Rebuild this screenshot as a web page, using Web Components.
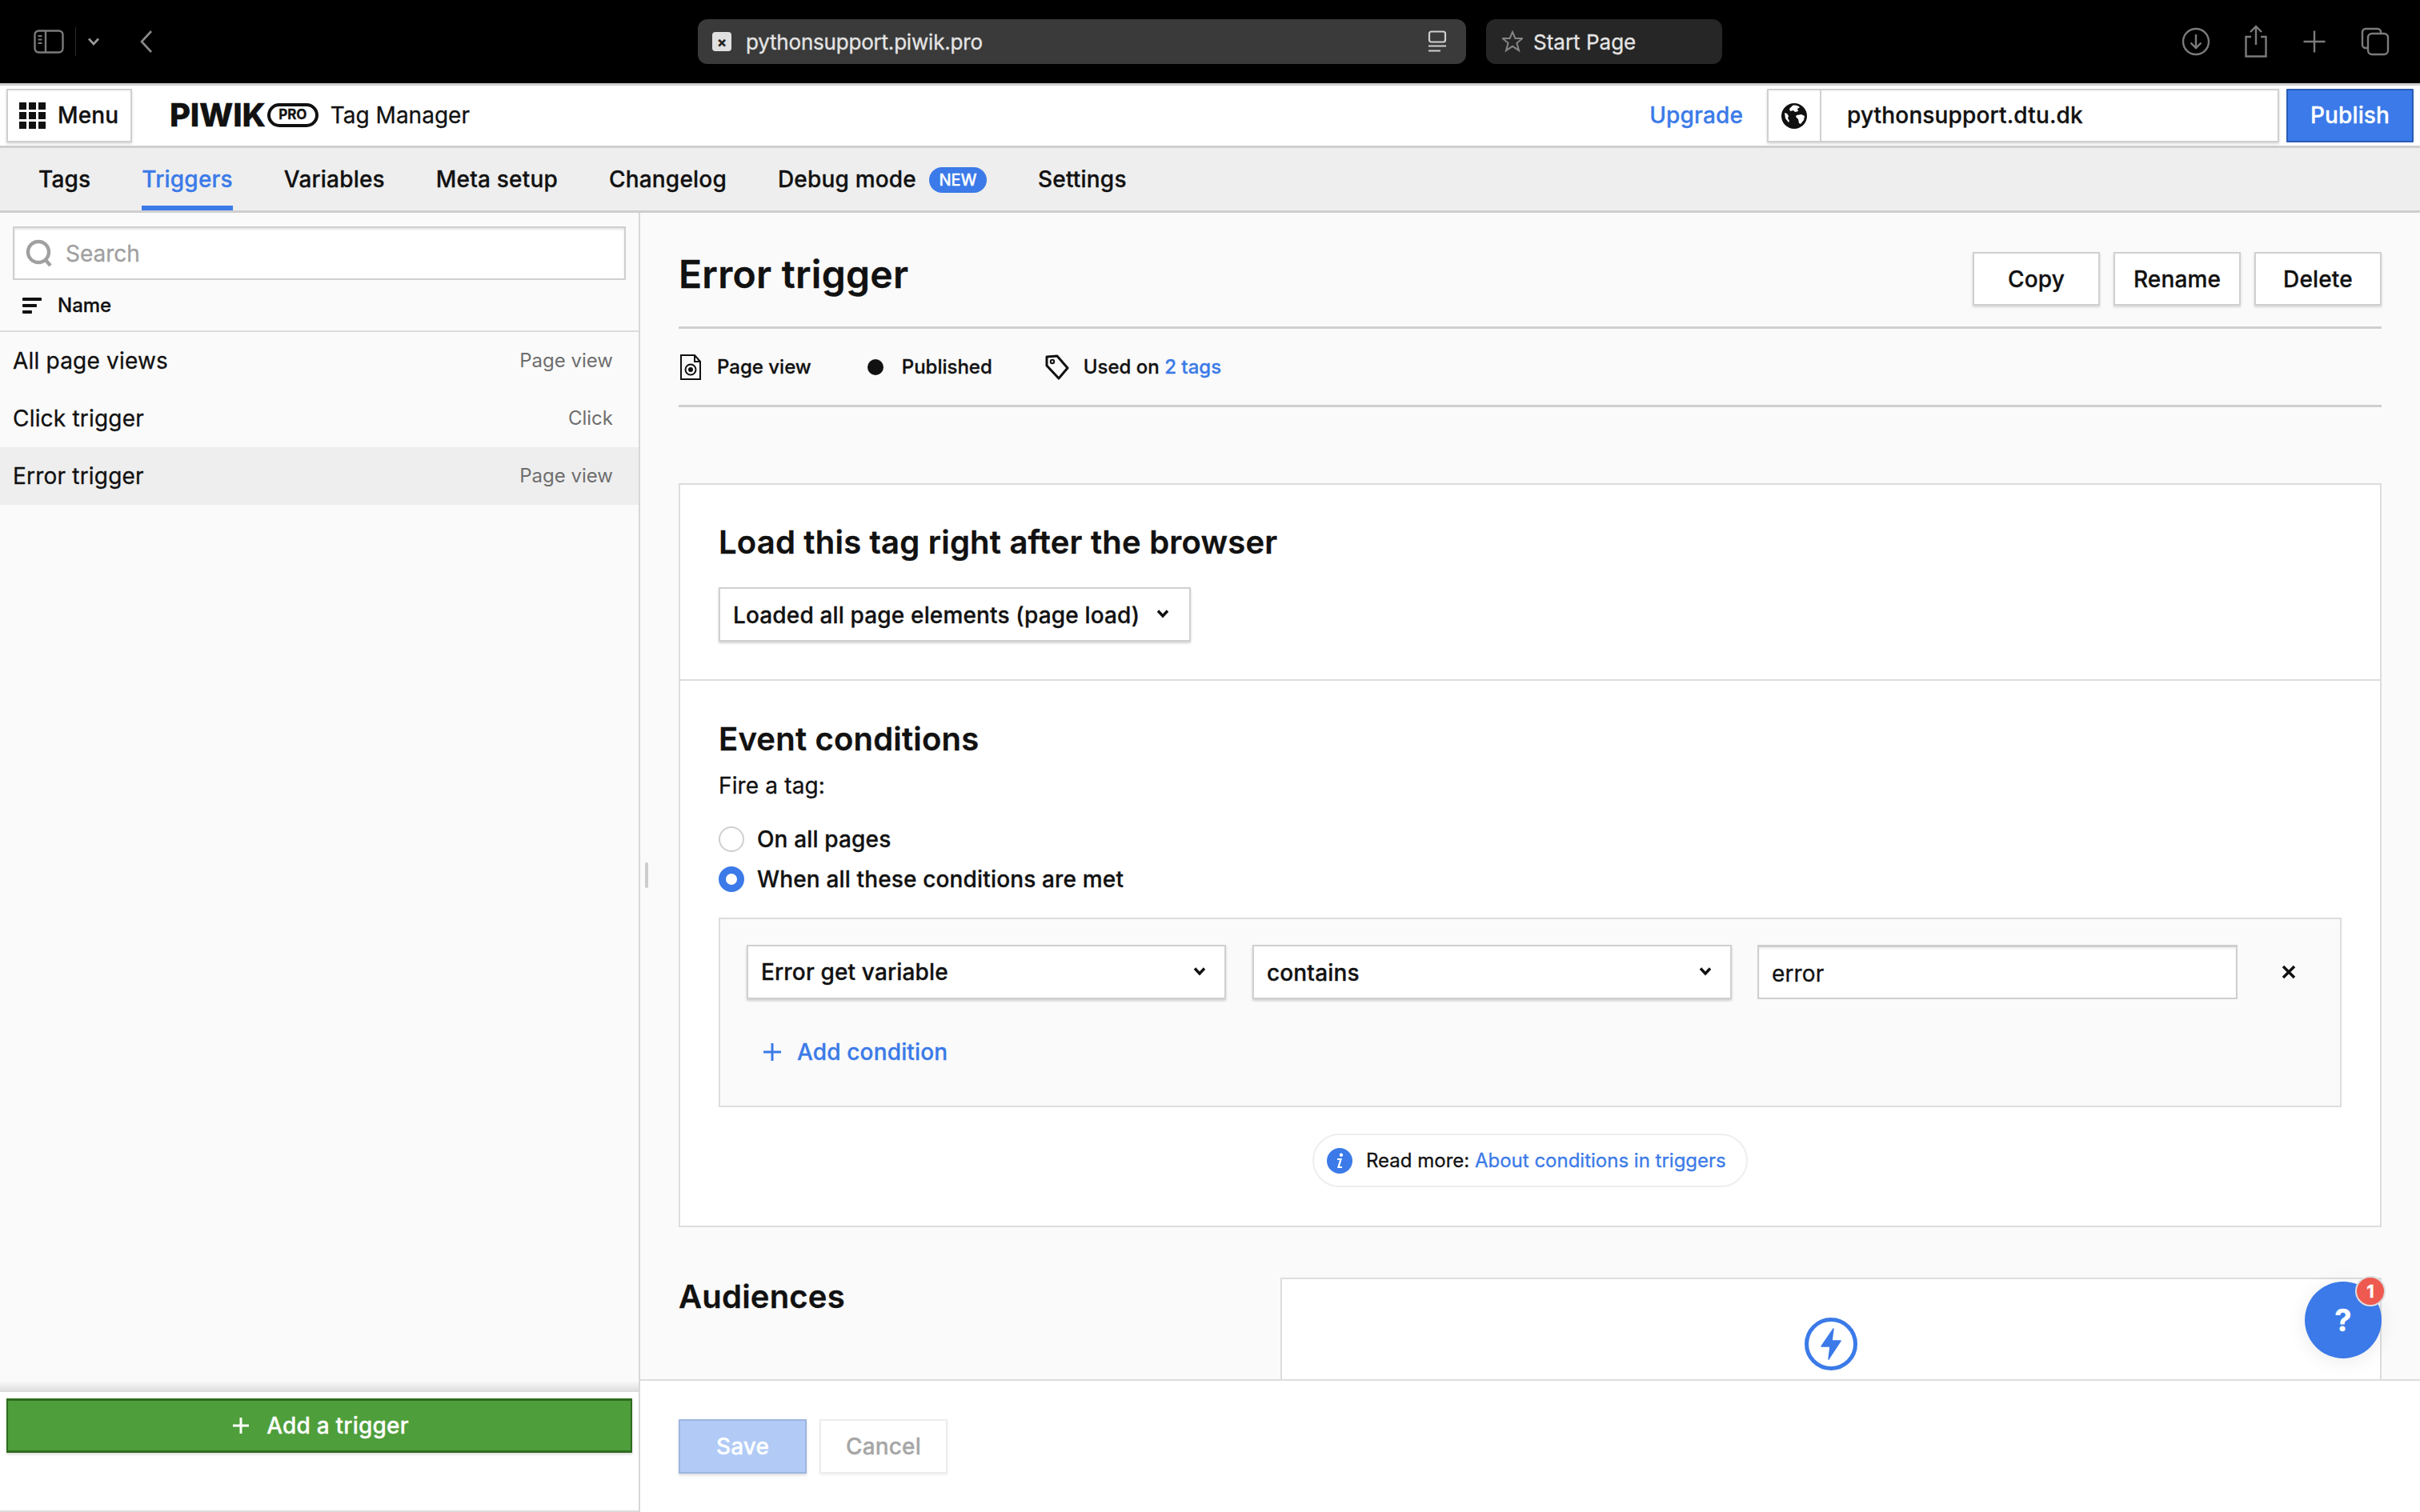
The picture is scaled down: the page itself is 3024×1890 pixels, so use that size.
<!DOCTYPE html>
<html lang="en"><head><meta charset="utf-8"><title>Error trigger</title>
<style>
html,body{margin:0;padding:0;height:100%;overflow:hidden;background:#fafafa}
body{font-family:Inter,"Liberation Sans",sans-serif;color:#111;font-size:28px;letter-spacing:.15px;-webkit-text-stroke:.3px}
piwik-app{display:flex;flex-direction:column;width:3024px;height:1890px}
</style></head><body>
<piwik-app>
  <browser-bar></browser-bar>
  <app-header></app-header>
  <app-tabs>
    <tab-item>Tags</tab-item>
    <tab-item active>Triggers</tab-item>
    <tab-item>Variables</tab-item>
    <tab-item>Meta setup</tab-item>
    <tab-item>Changelog</tab-item>
    <tab-item badge="NEW">Debug mode</tab-item>
    <tab-item>Settings</tab-item>
  </app-tabs>
  <app-main>
    <trigger-sidebar slot="side">
      <list-row type="Page view">All page views</list-row>
      <list-row type="Click">Click trigger</list-row>
      <list-row type="Page view" selected>Error trigger</list-row>
    </trigger-sidebar>
    <trigger-detail slot="detail"></trigger-detail>
  </app-main>
</piwik-app>
<script>
const def=(name,html)=>customElements.define(name,class extends HTMLElement{
  constructor(){super();this.attachShadow({mode:'open'}).innerHTML=typeof html==='function'?html(this):html;}
});
const chev='<svg width="18" height="12" viewBox="0 0 18 12"><path d="M3 2.500l6 6.500 6-6.500" fill="none" stroke="#111" stroke-width="3.400"/></svg>';

def('browser-bar',`<style>
:host{display:flex;align-items:center;height:104px;background:#000;border-bottom:3px solid #cfcfcf;box-sizing:content-box;flex:none;position:relative;letter-spacing:0}
.left{display:flex;align-items:center;width:872px;padding-left:42px;box-sizing:border-box;height:100%}
.sep{width:1px;height:36px;background:#2a2a2a;margin:0 14px 0 14px}
.addr{width:960px;height:56px;border-radius:12px;background:#3a3a3a;display:flex;align-items:center;padding:0 24px 0 18px;box-sizing:border-box;color:#e4e4e4;font-size:26px;font-weight:400;letter-spacing:-.2px}
.fav{width:24px;height:24px;border-radius:4px;background:#e0e0e0;color:#222;font-size:18px;font-weight:700;display:flex;align-items:center;justify-content:center;margin-right:18px}
.sp{flex:1}
.tab{margin-left:25px;width:295px;height:56px;border-radius:12px;background:#262626;display:flex;align-items:center;box-sizing:border-box;padding-left:20px;color:#e4e4e4;font-size:26px;gap:13px}
.right{flex:1;display:flex;align-items:center;padding-left:573px;gap:40px}
svg{display:block}
</style>
<div class="left">
<svg width="38" height="30" viewBox="0 0 38 30" fill="none" stroke="#7b7b7b" stroke-width="2.400"><rect x="1.500" y="1.500" width="35" height="27" rx="5"/><path d="M15 2v26"/><path d="M5.500 8h5M5.500 12.500h5M5.500 17h5" stroke-width="2"/></svg>
<div class="sep"></div>
<svg width="16" height="12" viewBox="0 0 16 12" fill="none" stroke="#9a9a9a" stroke-width="2.600"><path d="M2 2.500l6 6.500 6-6.500"/></svg>
<svg style="margin-left:48px" width="20" height="30" viewBox="0 0 20 30" fill="none" stroke="#8a8a8a" stroke-width="2.600"><path d="M16 2L4 15l12 13"/></svg>
</div>
<div class="addr"><span class="fav">×</span>pythonsupport.piwik.pro<span class="sp"></span>
<svg width="24" height="28" viewBox="0 0 24 28" fill="none" stroke="#d0d0d0" stroke-width="2.200"><rect x="2" y="1.500" width="20" height="13" rx="2.500"/><path d="M1 19.500h22M1 25.500h15"/></svg></div>
<div class="tab"><svg width="26" height="28" viewBox="0 0 26 28" fill="none" stroke="#858585" stroke-width="2"><path d="M13 2l3.400 8h9l-7 5.800 2.600 9.400-8-5.400-8 5.400 2.600-9.400-7-5.800h9z"/></svg>Start Page</div>
<div class="right">
<svg width="38" height="38" viewBox="0 0 38 38" fill="none" stroke="#7b7b7b" stroke-width="2.400"><circle cx="19" cy="19" r="16"/><path d="M19 10v17M12.500 20.500L19 27l6.500-6.500"/></svg>
<svg width="32" height="42" viewBox="0 0 32 42" fill="none" stroke="#7b7b7b" stroke-width="2.400"><path d="M16 25V3M9 9l7-7 7 7"/><path d="M10 15H3.500v24.500h25V15H22"/></svg>
<svg width="30" height="30" viewBox="0 0 30 30" fill="none" stroke="#7b7b7b" stroke-width="2.400" style="margin-left:2px"><path d="M15 1.500v27M1.500 15h27"/></svg>
<svg width="36" height="36" viewBox="0 0 36 36" fill="none" stroke="#7b7b7b" stroke-width="2.400" style="margin-left:3px"><path d="M9 26H6a4 4 0 0 1-4-4V6a4 4 0 0 1 4-4h15a4 4 0 0 1 4 4v2"/><rect x="9" y="8" width="25" height="26" rx="5"/></svg>
</div>`);

def('app-header',`<style>
:host{display:flex;align-items:center;height:75px;background:#fff;border-bottom:3px solid #cfcfcf;flex:none;padding:0 8px;box-sizing:content-box;font-size:28px}
.menu{width:157px;height:67px;box-sizing:border-box;border:2px solid #d0d0d0;box-shadow:0 2px 3px rgba(0,0,0,.15);display:flex;align-items:center;padding:0 0 2px 14px;gap:15px;font-weight:500}
.grid{display:grid;grid-template-columns:repeat(3,9px);grid-auto-rows:9px;gap:3px;margin-top:2px}
.grid i{background:#111;display:block}
.logo{margin-left:47px;display:flex;align-items:center;font-weight:800;font-size:40px;letter-spacing:-.2px;line-height:1;padding-bottom:2px}
.pro{margin-left:2px;border:4px solid #111;border-radius:16px;font-size:17px;font-weight:700;height:30px;width:64px;box-sizing:border-box;display:flex;align-items:center;justify-content:center;letter-spacing:0}
.tm{margin-left:15px;font-size:28px;font-weight:400;padding-bottom:2px;letter-spacing:0}
.sp{flex:1}
.up{color:#3b7ae8;font-weight:500;margin-right:30px;padding-bottom:2px}
.dom{width:640px;height:67px;box-sizing:border-box;border:2px solid #d0d0d0;box-shadow:0 2px 3px rgba(0,0,0,.15);display:flex;align-items:center;font-weight:500}
.gl{width:64px;height:100%;border-right:2px solid #d0d0d0;display:flex;align-items:center;justify-content:center}
.dom span{margin-left:32px;padding-bottom:2px}
.pub{margin-left:9px;width:159px;height:67px;box-sizing:border-box;background:#3b7ae8;border:2px solid #2a5cb5;color:#fff;display:flex;align-items:center;justify-content:center;font-weight:500;border-radius:1px;padding-bottom:2px}
</style>
<div class="menu"><div class="grid"><i></i><i></i><i></i><i></i><i></i><i></i><i></i><i></i><i></i></div>Menu</div>
<div class="logo">PIWIK<span class="pro">PRO</span></div><div class="tm">Tag Manager</div>
<div class="sp"></div>
<div class="up">Upgrade</div>
<div class="dom"><div class="gl"><svg width="32" height="32" viewBox="0 0 32 32"><circle cx="16" cy="16" r="16" fill="#111"/><path d="M14 3c3-1 7 0 9 2l-3 2 1 3-4 1-2-2-4 1-1-3zM19 15l6-1 4 2-1 5-4 5-2-1-1-5-3-3zM4 12l3 1 2 3-1 3 2 3-1 2-4-5z" fill="#fff"/></svg></div><span>pythonsupport.dtu.dk</span></div>
<div class="pub">Publish</div>`);

def('app-tabs',`<style>
:host{display:flex;height:78px;background:#eee;border-bottom:3px solid #cfcfcf;flex:none;padding-left:16px;letter-spacing:.19px}
</style><slot></slot>`);

def('tab-item',(el)=>`<style>
:host{display:flex;align-items:center;padding:0 32px;font-weight:500;font-size:28px;color:#111}
.in{height:78px;box-sizing:border-box;display:flex;align-items:center;gap:16px;border-bottom:6px solid transparent;padding-top:6px}
:host([active]) .in{border-bottom-color:#3b7ae8;color:#3b7ae8}
.b{background:#3b7ae8;color:#fff;font-size:20px;border-radius:16px;width:72px;height:32px;display:flex;align-items:center;justify-content:center;margin-top:2px;letter-spacing:0}
</style><div class="in"><slot></slot>${el.getAttribute('badge')?`<span class="b">${el.getAttribute('badge')}</span>`:''}</div>`);

def('app-main',`<style>
:host{display:flex;flex:1;min-height:0}
::slotted([slot=side]){width:800px;flex:none}
::slotted([slot=detail]){flex:1;min-width:0}
</style><slot name="side"></slot><slot name="detail"></slot>`);

def('trigger-sidebar',`<style>
:host{display:flex;flex-direction:column;box-sizing:border-box;border-right:2px solid #d8d8d8;background:#fafafa;position:relative;min-height:0}
.s{margin:17px 16px 0;height:67px;box-sizing:border-box;border:2px solid #cfcfcf;box-shadow:inset 0 2px 3px rgba(0,0,0,.1);background:#fff;display:flex;align-items:center;padding-left:14px;gap:16px;color:#a0a0a0;font-size:28px;letter-spacing:0}
.n{height:63px;display:flex;align-items:center;padding:0 0 0 28px;gap:20px;font-size:24px;font-weight:500;border-bottom:2px solid #ddd;box-sizing:content-box;letter-spacing:0}
.l{flex:1}
.grad{height:14px;background:linear-gradient(to bottom,rgba(0,0,0,0),rgba(0,0,0,.12))}
.f{height:150px;background:#fff;border-bottom:2px solid #ddd;box-sizing:border-box;padding:8px 8px 0}
.add{height:68px;box-sizing:border-box;background:#4e9e3b;border:2px solid #2f6b20;border-top-width:3px;border-bottom-width:3px;color:#fff;display:flex;align-items:center;justify-content:center;gap:22px;font-weight:500;font-size:28px;box-shadow:0 2px 3px rgba(0,0,0,.15);width:782px;letter-spacing:.2px;padding-left:4px}
</style>
<div class="s"><svg width="34" height="36" viewBox="0 0 34 36" fill="none" stroke="#a0a0a0" stroke-width="4.400"><circle cx="16" cy="16" r="13"/><path d="M25 26l6 7"/></svg>Search</div>
<div class="n"><svg width="24" height="20" viewBox="0 0 24 20" fill="#111"><rect width="24" height="4" rx="1"/><rect y="8" width="18" height="4" rx="1"/><rect y="16" width="12" height="4" rx="1"/></svg>Name</div>
<div class="l"><slot></slot></div>
<div class="grad"></div>
<div class="f"><div class="add"><svg width="20" height="20" viewBox="0 0 20 20" stroke="#fff" stroke-width="3"><path d="M10 0v20M0 10h20"/></svg>Add a trigger</div></div>`);

def('list-row',(el)=>`<style>
:host{display:flex;height:72px;align-items:center;justify-content:space-between;padding:0 32px 0 16px;font-size:28px;color:#111;letter-spacing:.2px}
:host([selected]){background:#eee}
.t{font-size:24px;color:#6e6e6e;letter-spacing:0;padding-bottom:2px;-webkit-text-stroke:0}
</style><slot></slot><span class="t">${el.getAttribute('type')}</span>`);

def('x-btn',`<style>
:host{display:flex;align-items:center;justify-content:center;width:159px;height:67px;box-sizing:border-box;background:#fff;border:2px solid #d0d0d0;box-shadow:0 2px 3px rgba(0,0,0,.15);font-weight:500;font-size:28px;color:#111;flex:none}
:host([save]){background:#b1cbf6;border-color:#9db6e0;color:#fff;width:160px}
:host([cancel]){border-color:#ededed;color:#a6a6a6;box-shadow:0 2px 3px rgba(0,0,0,.06);width:160px}
</style><slot></slot>`);

def('x-select',`<style>
:host{display:flex;align-items:center;justify-content:space-between;height:68px;box-sizing:border-box;background:#fff;border:2px solid #d0d0d0;box-shadow:0 2px 3px rgba(0,0,0,.18);padding:0 22px 0 16px;font-weight:500;font-size:28px;color:#111}
svg{display:block;margin-top:-2px}
</style><slot></slot>${chev}`);

def('x-radio',`<style>
:host{display:flex;align-items:center;height:50px;gap:16px;font-weight:500;font-size:28px}
i{width:32px;height:32px;box-sizing:border-box;border-radius:50%;border:2px solid #cfcfcf;background:#fff;display:block}
:host([on]) i{border:9px solid #3b7ae8}
</style><i></i><slot></slot>`);

def('trigger-detail',`<style>
:host{display:flex;flex-direction:column;min-height:0;position:relative;background:#fafafa}
.scroll{flex:1;min-height:0;overflow:hidden;padding:0 48px}
.head{display:flex;align-items:center;gap:17px;padding:49px 0 26px;border-bottom:3px solid #cfcfcf}
h1{font-size:48px;font-weight:600;margin:0;flex:1;line-height:56px;letter-spacing:.3px;padding-bottom:11px}
.meta{height:95px;display:flex;align-items:center;border-bottom:3px solid #cfcfcf;font-size:24px;font-weight:500;box-sizing:content-box;letter-spacing:0}
.meta svg{display:block;margin-right:20px;margin-left:2px}
.meta a,.link{color:#3b7ae8;font-weight:inherit}
.dot{width:20px;height:20px;border-radius:50%;background:#111;margin:0 23px 0 70px}
.card{margin-top:95px;background:#fff;border:2px solid #ddd}
.sec{padding:48px 48px 47px}
.sec+.sec{border-top:2px solid #ddd;padding-top:49px;padding-bottom:48px}
h2{font-size:40px;font-weight:600;margin:0;line-height:48px;letter-spacing:.2px}
.sel1{margin-top:32px;width:590px;padding-right:24px}
.fire{margin-top:14px;line-height:40px;font-size:28px;font-weight:400}
.radios{margin-top:22px}
.box{margin-top:23px;height:237px;box-sizing:border-box;background:#fafafa;border:2px solid #ddd;padding:32px 32px 0 33px}
.row{display:flex;align-items:center;gap:33px}
.row x-select{width:599px}
.inp{width:600px;height:68px;box-sizing:border-box;background:#fff;border:2px solid #cfcfcf;border-top-width:3px;box-shadow:inset 0 2px 3px rgba(0,0,0,.07);display:flex;align-items:center;padding:2px 16px 0;font-size:28px;margin-left:-1px}
.x{margin-left:21px}
.lower{padding-top:2px}
.sel1 span{display:block;padding-top:2px}
.addc{display:flex;align-items:center;gap:20px;margin-top:48px;margin-left:21px;font-weight:500;font-size:28px;color:#3b7ae8;height:36px}
.pillw{display:flex;justify-content:center;margin-top:33px}
.pill{height:67px;width:544px;box-sizing:border-box;border:2px solid #eee;border-radius:34px;display:flex;align-items:center;padding-left:16px;font-size:24px;background:#fff;white-space:pre;letter-spacing:0}
.pill svg{margin-right:17px}
.link{font-weight:400}
.aud{display:flex;margin-top:63px}
.aud h2{width:752px}
.ph{flex:1;height:300px;background:#fff;border:2px solid #ddd;display:flex;justify-content:center;padding-top:48px;box-sizing:border-box}
.foot{height:166px;flex:none;background:#fff;border-top:2px solid #ddd;box-sizing:border-box;padding:48px 0 0 48px;display:flex;gap:16px}
.foot x-btn{height:68px}
.fab{position:absolute;left:2080px;top:1336px;width:96px;height:96px;border-radius:50%;background:#3b7ae8;color:#fff;font-size:38px;font-weight:700;display:flex;align-items:center;justify-content:center;box-shadow:0 4px 24px rgba(0,0,0,.08)}
.badge{position:absolute;left:63px;top:-7px;width:38px;height:38px;box-sizing:border-box;border-radius:50%;background:#ee5a50;border:2px solid #ddd;color:#fff;font-size:22px;font-weight:700;display:flex;align-items:center;justify-content:center}
.handle{position:absolute;left:6px;top:812px;width:4px;height:32px;background:#ccc;border-radius:2px}
</style>
<div class="scroll">
 <div class="head"><h1>Error trigger</h1><x-btn>Copy</x-btn><x-btn>Rename</x-btn><x-btn>Delete</x-btn></div>
 <div class="meta">
  <svg width="26" height="32" viewBox="0 0 26 32" fill="none" stroke="#111" stroke-width="2"><path d="M1 1h17l7 8v22H1z"/><path d="M18 1v8h7"/><circle cx="13" cy="19" r="6.500"/><circle cx="13" cy="19" r="2" fill="#111"/></svg>Page view
  <span class="dot"></span>Published
  <svg style="margin-left:66px;margin-right:18px" width="30" height="32" viewBox="0 0 30 32" fill="none" stroke="#111" stroke-width="3"><path d="M2 3l13-1 13 15-11 13L2 14z" stroke-linejoin="round"/><circle cx="9" cy="9" r="2.200" stroke-width="2"/></svg><span>Used on <a>2 tags</a></span>
 </div>
 <div class="card">
  <div class="sec"><h2>Load this tag right after the browser</h2><x-select class="sel1"><span>Loaded all page elements (page load)</span></x-select></div>
  <div class="sec">
   <h2>Event conditions</h2>
   <div class="fire">Fire a tag:</div>
   <div class="radios"><x-radio>On all pages</x-radio><x-radio on>When all these conditions are met</x-radio></div>
   <div class="box">
    <div class="row"><x-select>Error get variable</x-select><x-select><span class="lower" style="display:block">contains</span></x-select><div class="inp">error</div>
     <svg class="x" width="20" height="20" viewBox="0 0 20 20" stroke="#111" stroke-width="3.400" fill="none"><path d="M3 3l14 14M17 3L3 17"/></svg></div>
    <div class="addc"><svg width="22" height="22" viewBox="0 0 22 22" stroke="#3b7ae8" stroke-width="3"><path d="M11 0v22M0 11h22"/></svg>Add condition</div>
   </div>
   <div class="pillw"><div class="pill"><svg width="32" height="32" viewBox="0 0 32 32"><circle cx="16" cy="16" r="16" fill="#3b7ae8"/><path d="M18 6.500a2.200 2.200 0 1 1-.1 0zM13 13h6l-3 10h3v2h-6l3-10h-3z" fill="#fff"/></svg>Read more: <span class="link">About conditions in triggers</span></div></div>
  </div>
 </div>
 <div class="aud"><h2>Audiences</h2><div class="ph"><svg width="66" height="66" viewBox="0 0 66 66"><circle cx="33" cy="33" r="30.500" fill="#fff" stroke="#3b7ae8" stroke-width="5"/><path d="M36 14L21 36h11l-2 16 15-23H34z" fill="#3b7ae8" stroke="#3b7ae8" stroke-width="1.500" stroke-linejoin="round"/></svg></div></div>
</div>
<div class="foot"><x-btn save>Save</x-btn><x-btn cancel>Cancel</x-btn></div>
<div class="handle"></div>
<div class="fab">?<span class="badge">1</span></div>`);
</script>
</body></html>
